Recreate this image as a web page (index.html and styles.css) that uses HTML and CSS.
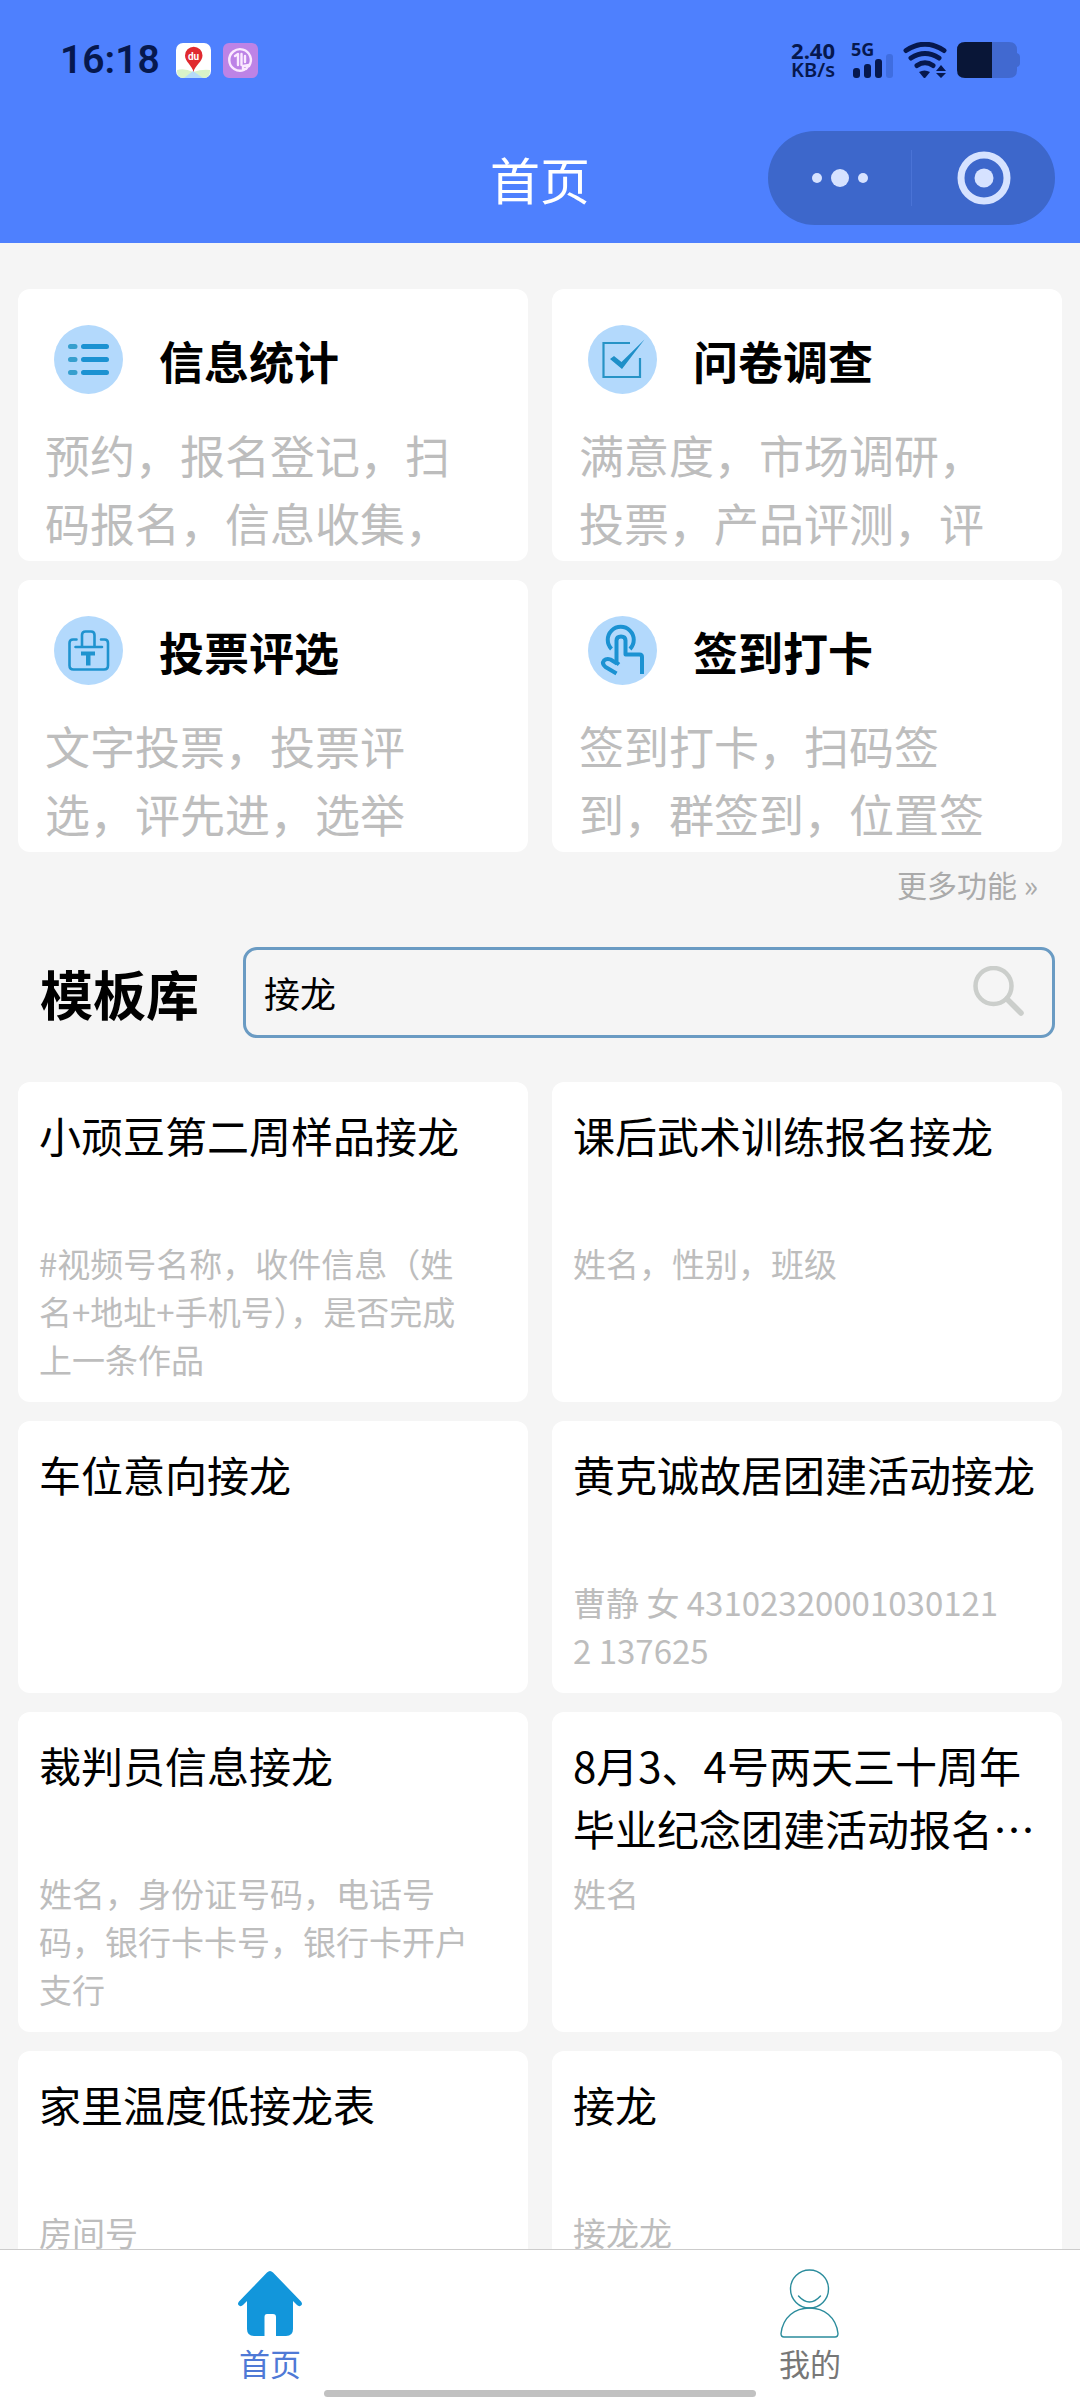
FILE: index.html
```html
<!DOCTYPE html>
<html lang="zh-CN">
<head>
  <meta charset="UTF-8" />
  <meta name="viewport" content="width=device-width, initial-scale=1.0"/>
  <title>首页</title>
  <link rel="stylesheet" href="styles.css">
</head>
<body>

<header class="header">
  <div class="status-bar">
    <div class="status-left">
      <span class="clock">16:18</span>
      <svg class="app-icon" viewBox="0 0 35 35">
        <rect width="35" height="35" rx="7" fill="#fff"/>
        <path d="M1 27 Q9 25 17 29 Q26 26 34 27 V28 Q34 35 28 35 H7 Q1 35 1 28Z" fill="#d9f3c8"/>
        <path d="M8 35 L17 28 L27 35Z" fill="#b5dcf8"/>
        <path d="M17.500 29 C16 22 9 19 9 12.500 A8.700 8.700 0 0 1 26.500 12.500 C26.500 19 19 22 17.500 29Z" fill="#e0292f"/>
        <text x="17.500" y="16.500" class="pin-text">du</text>
      </svg>
      <svg class="app-icon" viewBox="0 0 35 35">
        <rect width="35" height="35" rx="6" fill="#bd83e6"/>
        <g fill="none" stroke="#fbeaff" stroke-width="2.400" stroke-linecap="round" stroke-linejoin="round">
          <path d="M26 23 A10.800 10.800 0 1 0 21 27"/>
          <path d="M12 13 L15 11 V22 M18.500 11 V22 M22 13 V19"/>
          <path d="M20 26 L20 23 L26 22 L23 26Z"/>
        </g>
      </svg>
    </div>
    <div class="status-right">
      <div class="net-speed"><span>2.40</span><span class="unit">KB/s</span></div>
      <div class="signal">
        <span class="signal-type">5G</span>
        <svg class="signal-bars" viewBox="0 0 42 24">
          <g fill="#06184e">
            <rect x="2" y="14" width="7" height="10" rx="3"/>
            <rect x="13" y="10" width="7" height="14" rx="3"/>
            <rect x="24" y="5" width="7" height="19" rx="3"/>
          </g>
          <rect x="35" y="0" width="7" height="24" rx="3" fill="#3f6de0"/>
        </svg>
      </div>
      <svg class="wifi" viewBox="0 0 44 36">
        <g fill="none" stroke="#06184e" stroke-width="5" stroke-linecap="round">
          <path d="M3 8.500 Q22 -4 41 8.500"/>
          <path d="M8 16 Q22 7 36 16"/>
          <path d="M14 23.500 Q22 18 30 23.500"/>
        </g>
        <path d="M16 30 Q21.500 27 27 30 L22.500 35.500 Q21.500 36.500 20.500 35.500Z" fill="#06184e"/>
        <path d="M33 29 L38 23 L43 29Z M33 31 H43 L38 36Z" fill="#06184e"/>
      </svg>
      <svg class="battery" viewBox="0 0 63 36">
        <path d="M35 0 H52 Q60 0 60 8 V11 Q63 12 63 15 V21 Q63 24 60 25 V28 Q60 36 52 36 H35Z" fill="#4169d0"/>
        <path d="M35 0 H8 Q0 0 0 8 V28 Q0 36 8 36 H35Z" fill="#091637"/>
      </svg>
    </div>
  </div>

  <div class="nav-bar">
    <h1 class="nav-title">首页</h1>
    <div class="capsule">
      <button class="capsule-btn" type="button" aria-label="更多">
        <svg class="dots-icon" viewBox="0 0 58 20" fill="#d6e2ff">
          <circle cx="6" cy="10" r="5"/><circle cx="29" cy="10" r="9"/><circle cx="52" cy="10" r="5"/>
        </svg>
      </button>
      <span class="capsule-line"></span>
      <button class="capsule-btn" type="button" aria-label="关闭">
        <svg class="ring-icon" viewBox="0 0 54 54">
          <circle cx="27" cy="27" r="23" fill="none" stroke="#d6e2ff" stroke-width="7"/>
          <circle cx="27" cy="27" r="9.500" fill="#d6e2ff"/>
        </svg>
      </button>
    </div>
  </div>
</header>

<main class="content">
  <section class="feature-grid">
    <a class="feature-card" href="#">
      <div class="feature-head">
        <svg class="feature-icon" viewBox="0 0 69 69">
          <circle cx="34.500" cy="34.500" r="34.500" fill="#b3d9fc"/>
          <g fill="none" stroke="#1b92d2" stroke-width="5" stroke-linecap="round">
            <path d="M29.500 21.500 H52.500 M29.500 34.500 H52.500 M29.500 47.500 H52.500"/>
            <path d="M16.500 21.500 H21 M16.500 34.500 H21 M16.500 47.500 H21" stroke="#369fce"/>
          </g>
        </svg>
        <h2>信息统计</h2>
      </div>
      <p>预约，报名登记，扫码报名，信息收集，</p>
    </a>
    <a class="feature-card" href="#">
      <div class="feature-head">
        <svg class="feature-icon" viewBox="0 0 69 69">
          <circle cx="34.500" cy="34.500" r="34.500" fill="#b3d9fc"/>
          <path d="M42 18 H15.500 V52 H52 V33" fill="none" stroke="#2793c6" stroke-width="2.200"/>
          <path d="M22 34 L26 31 L33.500 37 L56.500 14.500 L34 44Z" fill="#1f8fc8"/>
        </svg>
        <h2>问卷调查</h2>
      </div>
      <p>满意度，市场调研，投票，产品评测，评</p>
    </a>
    <a class="feature-card" href="#">
      <div class="feature-head">
        <svg class="feature-icon" viewBox="0 0 69 69">
          <circle cx="34.500" cy="34.500" r="34.500" fill="#b3d9fc"/>
          <g fill="none" stroke="#1f93cf" stroke-width="2.600" stroke-linecap="round" stroke-linejoin="round">
            <path d="M22.500 23.500 H19 Q15.500 23.500 15.500 27 V49.500 Q15.500 53.500 19.500 53.500 H50 Q54 53.500 54 49.500 V27 Q54 23.500 50.500 23.500 H47"/>
            <path d="M21.500 31 H48 M28 31 V19 Q28 15.500 31.500 15.500 H37 Q40.500 15.500 40.500 19 V31"/>
          </g>
          <path d="M27 35.500 H41 V39.500 H36.500 V49.500 H32 V39.500 H27Z" fill="#1f93cf"/>
        </svg>
        <h2>投票评选</h2>
      </div>
      <p>文字投票，投票评选，评先进，选举</p>
    </a>
    <a class="feature-card" href="#">
      <div class="feature-head">
        <svg class="feature-icon" viewBox="0 0 69 69">
          <circle cx="34.500" cy="34.500" r="34.500" fill="#b3d9fc"/>
          <g fill="none" stroke="#1b92d2" stroke-width="4" stroke-linejoin="round">
            <path d="M23.500 33 A13 13 0 1 1 42 33"/>
            <path d="M31 48.500 L28.500 46.500 V24.500 Q28.500 20.500 33 20.500 Q37.500 20.500 37.500 24.500 V38.500 H51.500 Q54 38.500 54 41 V58"/>
            <path d="M29 47.500 L22.500 43.500 Q18.500 42 16 44.500 Q13.500 47.500 17.500 51 L28.500 57.500"/>
          </g>
        </svg>
        <h2>签到打卡</h2>
      </div>
      <p>签到打卡，扫码签到，群签到，位置签</p>
    </a>
  </section>

  <a class="more-link" href="#">更多功能 »</a>

  <form class="search-row">
    <label class="search-title" for="keyword">模板库</label>
    <div class="search-box">
      <input type="text" id="keyword" value="接龙">
      <button class="search-btn" type="button" aria-label="搜索">
        <svg viewBox="0 0 51 51" fill="none" stroke="#cbcecb" stroke-linecap="round">
          <circle cx="20.500" cy="20" r="18" stroke-width="4.500"/>
          <path d="M34 33 L48 47" stroke-width="5.500"/>
        </svg>
      </button>
    </div>
  </form>

  <section class="template-grid">
    <a class="template-card" href="#">
      <h3>小顽豆第二周样品接龙</h3>
      <p>#视频号名称，收件信息（姓名+地址+手机号），是否完成上一条作品</p>
    </a>
    <a class="template-card" href="#">
      <h3>课后武术训练报名接龙</h3>
      <p>姓名，性别，班级</p>
    </a>
    <a class="template-card" href="#">
      <h3>车位意向接龙</h3>
    </a>
    <a class="template-card" href="#">
      <h3>黄克诚故居团建活动接龙</h3>
      <p>曹静 女 431023200010301212 137625</p>
    </a>
    <a class="template-card" href="#">
      <h3>裁判员信息接龙</h3>
      <p>姓名，身份证号码，电话号码，银行卡卡号，银行卡开户支行</p>
    </a>
    <a class="template-card" href="#">
      <h3>8月3、4号两天三十周年毕业纪念团建活动报名…</h3>
      <p>姓名</p>
    </a>
    <a class="template-card" href="#">
      <h3>家里温度低接龙表</h3>
      <p>房间号</p>
    </a>
    <a class="template-card" href="#">
      <h3>接龙</h3>
      <p>接龙龙</p>
    </a>
  </section>
</main>

<nav class="tab-bar">
  <a class="tab active" href="#">
    <svg class="tab-icon" viewBox="0 0 70 70">
      <path d="M32 3.500 Q35 0.500 38 3.500 L66 32.500 Q68 35 66 36.500 Q64 38 62 36 L58 32 V60 Q58 67 51 67 H41 V48 Q41 45 38 45 H32 Q29.500 45 29.500 48 V67 H19 Q12 67 12 60 V32 L8 36 Q6 38 4 36.500 Q2 35 4 32.500Z" fill="#1296db"/>
    </svg>
    <span>首页</span>
  </a>
  <a class="tab" href="#">
    <svg class="tab-icon" viewBox="0 0 70 70" fill="none" stroke="#2b8c9c" stroke-width="1.400" stroke-linecap="round">
      <circle cx="34.500" cy="20" r="19"/>
      <path d="M23.500 27 Q34.500 39 45.500 27"/>
      <path d="M9 68 Q6 68 6 64.500 C8 48 20 39 34.500 39 C49 39 61 48 63 64.500 Q63 68 60 68Z"/>
    </svg>
    <span>我的</span>
  </a>
  <div class="home-indicator"></div>
</nav>

</body>
</html>
```
FILE: styles.css
```css
:root {
  --primary: #4e80fe;
  --page-bg: #f5f5f5;
  --card-bg: #ffffff;
  --status-color: #06184e;
  --muted: #bdbdbd;
  --search-border: #6a9bc3;
}

* {
  box-sizing: border-box;
}

body {
  margin: 0;
  font-family: "Noto Sans CJK SC", sans-serif;
  background-color: var(--page-bg);
  color: #000;
  display: flex;
  flex-direction: column;
  height: 100vh;
}

h1, h2, h3, p {
  margin: 0;
  font-weight: 400;
}

a {
  color: inherit;
  text-decoration: none;
}

button {
  border: none;
  background: none;
  padding: 0;
  cursor: pointer;
}

svg {
  display: block;
}

/* header */
.header {
  background-color: var(--primary);
  padding-bottom: 18px;
}

.status-bar {
  display: flex;
  justify-content: space-between;
  align-items: center;
  height: 131px;
  padding: 0 60px 11px;
  color: var(--status-color);
}

.status-left {
  display: flex;
  align-items: center;
  gap: 12px;
}

.clock {
  font-family: Roboto, sans-serif;
  font-size: 39px;
  font-weight: 600;
  margin-right: 4px;
}

.app-icon {
  width: 35px;
  height: 35px;
}

.pin-text {
  font-family: Roboto, sans-serif;
  font-size: 10px;
  font-weight: 700;
  fill: #fff;
  text-anchor: middle;
}

.status-right {
  display: flex;
  align-items: center;
  gap: 10px;
}

.net-speed {
  display: flex;
  flex-direction: column;
  align-items: center;
  font-family: "Noto Sans", sans-serif;
  font-size: 22px;
  font-weight: 700;
  line-height: 20px;
  margin-right: 6px;
}

.net-speed .unit {
  font-size: 20px;
  font-weight: 600;
}

.signal {
  position: relative;
}

.signal-type {
  position: absolute;
  top: 0;
  left: 0;
  font-family: "Noto Sans", sans-serif;
  font-size: 18px;
  font-weight: 700;
  line-height: 14px;
}

.signal-bars {
  width: 42px;
  height: 24px;
  margin-top: 12px;
}

.wifi {
  width: 44px;
  height: 36px;
}

.battery {
  width: 63px;
  height: 36px;
}

.nav-bar {
  display: grid;
  grid-template-columns: 1fr auto 1fr;
  align-items: center;
  padding: 0 25px;
}

.nav-title {
  grid-column: 2;
  color: #fff;
  font-size: 50px;
  line-height: 94px;
}

.capsule {
  justify-self: end;
  display: flex;
  align-items: center;
  width: 287px;
  height: 94px;
  border-radius: 47px;
  background-color: #3d67cb;
}

.capsule-btn {
  flex: 1;
  display: flex;
  justify-content: center;
}

.capsule-line {
  width: 1px;
  height: 56px;
  background-color: #4a73d6;
}

.dots-icon {
  width: 58px;
  height: 20px;
}

.ring-icon {
  width: 54px;
  height: 54px;
}

/* content */
.content {
  flex: 1;
  min-height: 0;
  overflow-y: auto;
  padding: 46px 18px 18px;
  scrollbar-width: none;
}

.feature-grid,
.template-grid {
  display: grid;
  grid-template-columns: 1fr 1fr;
  gap: 19px 24px;
}

.feature-card {
  height: 272px;
  overflow: hidden;
  padding: 35px 60px 0 27px;
  border-radius: 12px;
  background-color: var(--card-bg);
}

.feature-head {
  display: flex;
  align-items: center;
  gap: 36px;
  padding-left: 9px;
  margin-bottom: 26px;
}

.feature-icon {
  width: 69px;
  height: 69px;
}

.feature-head h2 {
  padding-top: 2px;
  font-size: 45px;
  font-weight: 700;
  line-height: 69px;
}

.feature-card p {
  color: var(--muted);
  font-size: 45px;
  line-height: 68px;
}

.more-link {
  display: block;
  width: fit-content;
  margin-left: auto;
  padding-right: 24px;
  color: #aaa;
  font-size: 30px;
  line-height: 64px;
}

.search-row {
  display: flex;
  align-items: center;
  gap: 44px;
  margin: 31px 7px 44px 22px;
}

.search-title {
  padding-top: 2px;
  font-size: 53px;
  font-weight: 700;
  line-height: 89px;
}

.search-box {
  flex: 1;
  display: flex;
  align-items: center;
  height: 91px;
  padding: 0 28px 2px 16px;
  border: 3px solid var(--search-border);
  border-radius: 14px;
}

.search-box input {
  flex: 1;
  min-width: 0;
  border: none;
  outline: none;
  background: none;
  font-family: inherit;
  font-size: 36px;
}

.search-btn svg {
  width: 51px;
  height: 51px;
}

.template-card {
  min-height: 272px;
  padding: 21px 21px 19px;
  border-radius: 12px;
  background-color: var(--card-bg);
}

.template-card h3 {
  height: 119px;
  margin-bottom: 17px;
  overflow: hidden;
  font-size: 42px;
  line-height: 63px;
}

.template-card p {
  padding-right: 32px;
  color: var(--muted);
  font-size: 33px;
  line-height: 48px;
  word-break: break-all;
}

/* bottom tabs */
.tab-bar {
  position: relative;
  display: flex;
  height: 151px;
  border-top: 1px solid #ccc;
  background-color: var(--card-bg);
}

.tab {
  flex: 1;
  display: flex;
  flex-direction: column;
  align-items: center;
  padding-top: 19px;
  color: #777;
  font-size: 31px;
  line-height: 48px;
}

.tab.active {
  color: #4f79d6;
}

.tab-icon {
  width: 70px;
  height: 70px;
}

.home-indicator {
  position: absolute;
  left: 30%;
  right: 30%;
  bottom: 3px;
  height: 7px;
  border-radius: 4px;
  background-color: #c1c1c1;
}
```
